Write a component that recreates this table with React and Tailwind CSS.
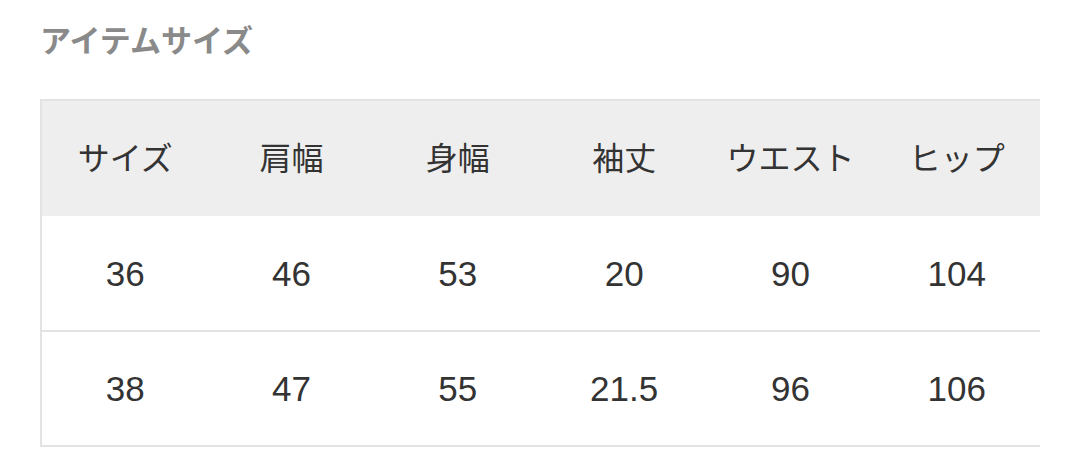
const headers = ['サイズ', '肩幅', '身幅', '袖丈', 'ウエスト', 'ヒップ'];

const rows = [
  ['36', '46', '53', '20', '90', '104'],
  ['38', '47', '55', '21.5', '96', '106'],
];

export default function App() {
  return (
    <div
      className="w-[1080px] h-[463px] bg-white overflow-hidden"
      style={{ fontFamily: '"Liberation Sans", "Noto Sans CJK JP", sans-serif' }}
    >
      <h2 className="ml-[40px] pt-[26px] text-[31px] leading-none font-bold text-[#8a8a8a]">
        アイテムサイズ
      </h2>

      <div className="ml-[40px] mt-[42px] w-[1000px] border-l-2 border-t-2 border-[#e3e3e3] text-[#333333]">
        <div className="grid grid-cols-6 h-[115px] items-center bg-[#eeeeee] text-[32px]">
          {headers.map((h) => (
            <div key={h} className="text-center leading-none">
              {h}
            </div>
          ))}
        </div>
        {rows.map((row, i) => (
          <div
            key={i}
            className={`grid grid-cols-6 items-center border-b-2 border-[#e3e3e3] text-[35px] ${i === 0 ? 'h-[116px]' : 'h-[115px]'}`}
          >
            {row.map((v, j) => (
              <div key={j} className="text-center leading-none">
                {v}
              </div>
            ))}
          </div>
        ))}
      </div>
    </div>
  );
}
